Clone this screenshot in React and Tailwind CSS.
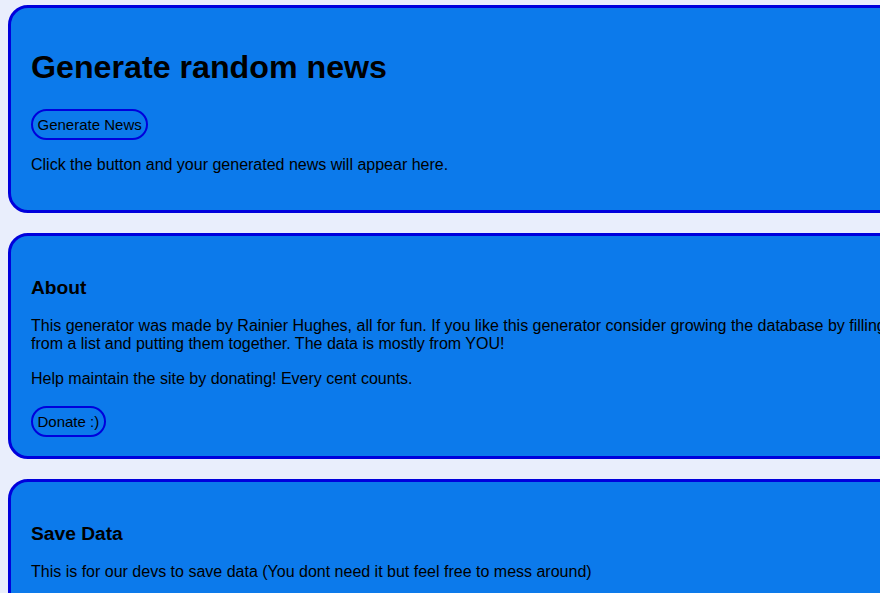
import React from "react";

function Card({ children }) {
  return (
    <section className="w-[1240px] rounded-[20px] border-[3px] border-[#0000dc] bg-[#0c7aeb] px-[20px] py-[19px]">
      {children}
    </section>
  );
}

function PillButton({ children }) {
  return (
    <button className="rounded-full border-2 border-[#0000dc] bg-transparent px-[4.5px] py-[5px] text-[15px] leading-[17px] text-black">
      {children}
    </button>
  );
}

export default function App() {
  return (
    <div
      className="h-[593px] overflow-hidden bg-[#e9eefc] pl-[8px] pt-[5px] text-black"
      style={{ fontFamily: '"Liberation Sans", Arial, sans-serif' }}
    >
      <div className="flex flex-col gap-[20px]">
        <Card>
          <h1 className="mt-[22px] mb-[22.5px] text-[32.2px] font-bold leading-[37px]">
            Generate random news
          </h1>
          <PillButton>Generate News</PillButton>
          <p className="mt-[16px] mb-[17px] text-[16px] leading-[18.4px]">
            Click the button and your generated news will appear here.
          </p>
        </Card>

        <Card>
          <h3 className="mt-[22px] mb-[18.5px] text-[19.2px] font-bold leading-[21.5px]">
            About
          </h3>
          <p className="text-[16px] leading-[18.4px]">
            This generator was made by Rainier Hughes, all for fun. If you like this generator consider growing the database by filling
            <br />
            from a list and putting them together. The data is mostly from YOU!
          </p>
          <p className="mt-[16px] text-[16px] leading-[18.4px]">
            Help maintain the site by donating! Every cent counts.
          </p>
          <div className="mt-[18px]">
            <PillButton>Donate :)</PillButton>
          </div>
        </Card>

        <Card>
          <h3 className="mt-[22px] mb-[18.5px] text-[19.2px] font-bold leading-[21.5px]">
            Save Data
          </h3>
          <p className="mb-[16px] text-[16px] leading-[18.4px]">
            This is for our devs to save data (You dont need it but feel free to mess around)
          </p>
        </Card>
      </div>
    </div>
  );
}
